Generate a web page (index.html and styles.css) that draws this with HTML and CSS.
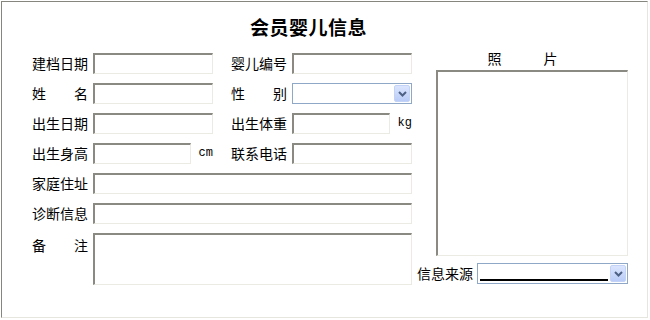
FILE: index.html
```html
<!DOCTYPE html>
<html lang="zh-CN">
<head>
    <meta charset="UTF-8">
    <title>会员婴儿信息</title>
    <link rel="stylesheet" href="styles.css">
</head>
<body>
    <div class="frame">
        <h1 class="title">会员婴儿信息</h1>
        <div class="content">
            <div class="form">
                <div class="row">
                    <div class="field"><span class="lbl">建档日期</span><input class="txt" type="text"></div>
                    <div class="field"><span class="lbl">婴儿编号</span><input class="txt" type="text"></div>
                </div>
                <div class="row">
                    <div class="field"><span class="lbl">姓　　名</span><input class="txt" type="text"></div>
                    <div class="field"><span class="lbl">性　　别</span>
                        <div class="combo">
                            <span class="value"></span>
                            <span class="btn"><svg width="13" height="15" viewBox="0 0 13 15"><polyline points="3,6 6.5,9.5 10,6" fill="none" stroke="#4d6185" stroke-width="2"/></svg></span>
                        </div>
                    </div>
                </div>
                <div class="row">
                    <div class="field"><span class="lbl">出生日期</span><input class="txt" type="text"></div>
                    <div class="field"><span class="lbl">出生体重</span><input class="txt short" type="text"><span class="unit">kg</span></div>
                </div>
                <div class="row">
                    <div class="field"><span class="lbl">出生身高</span><input class="txt short" type="text"><span class="unit">cm</span></div>
                    <div class="field"><span class="lbl">联系电话</span><input class="txt" type="text"></div>
                </div>
                <div class="row">
                    <div class="field wide"><span class="lbl">家庭住址</span><input class="txt" type="text"></div>
                </div>
                <div class="row">
                    <div class="field wide"><span class="lbl">诊断信息</span><input class="txt" type="text"></div>
                </div>
                <div class="row">
                    <div class="field wide top"><span class="lbl">备　　注</span><textarea class="txt memo"></textarea></div>
                </div>
            </div>
            <div class="side">
                <div class="photo-label">照　　　片</div>
                <div class="photo"></div>
                <div class="source">
                    <span class="lbl">信息来源</span>
                    <div class="combo long">
                        <span class="value"><span class="blank"></span></span>
                        <span class="btn"><svg width="13" height="17" viewBox="0 0 13 17"><polyline points="3,7 6.5,10.5 10,7" fill="none" stroke="#4d6185" stroke-width="2"/></svg></span>
                    </div>
                </div>
            </div>
        </div>
    </div>
</body>
</html>
```

FILE: styles.css
```css
body {
    margin: 0;
    background: #fff;
    color: #000;
    font-family: "Noto Sans CJK SC", "Noto Sans", sans-serif;
    font-size: 14px;
    line-height: 17px;
}
.frame {
    box-sizing: border-box;
    width: 647px;
    height: 317px;
    margin: 1px 0 0 1px;
    padding: 12px 0 0 30px;
    border: 1px solid;
    border-color: #86867e #e6e6de #e6e6de #86867e;
}
.title {
    width: 553px;
    margin: 0 0 13px;
    text-align: center;
    font-size: 19px;
    line-height: 26px;
    letter-spacing: 0.5px;
    font-weight: bold;
}
.content {
    display: flex;
    gap: 5px;
    align-items: flex-start;
}
.form {
    width: 380px;
    display: flex;
    flex-direction: column;
    gap: 9px;
}
.row {
    display: flex;
    gap: 18px;
}
.field {
    width: 181px;
    display: flex;
    align-items: center;
    gap: 5px;
}
.field.wide {
    width: 380px;
}
.field.top {
    align-items: flex-start;
}
.field.top .lbl {
    padding-top: 4px;
}
.lbl {
    width: 56px;
    flex: none;
    white-space: nowrap;
}
.txt {
    box-sizing: border-box;
    width: 120px;
    height: 21px;
    margin: 0;
    padding: 0 2px;
    background: #fff;
    border-style: solid;
    border-width: 2px 1px 1px 2px;
    border-color: #8a8a82 #ecebe3 #ecebe3 #8a8a82;
    font: inherit;
    outline: none;
}
.field.wide .txt {
    width: 319px;
}
.txt.short {
    width: 98px;
}
.memo {
    height: 52px;
    resize: none;
}
.unit {
    width: 17px;
    text-align: right;
    font-family: "Liberation Mono", monospace;
    font-size: 12px;
}
.combo {
    box-sizing: border-box;
    width: 120px;
    height: 21px;
    display: flex;
    padding: 1px;
    background: #fff;
    border: 1px solid #8fa8c8;
}
.combo .value {
    flex: 1;
    display: flex;
    align-items: flex-end;
}
.combo .btn {
    box-sizing: border-box;
    width: 16px;
    display: flex;
    align-items: center;
    justify-content: center;
    background: linear-gradient(#dbe5fd, #b9ccf7);
    border: 1px solid #c3d3f8;
    border-radius: 2px;
}
.side {
    width: 211px;
    margin-top: -3px;
}
.photo-label {
    text-align: center;
    margin-bottom: 3px;
}
.photo {
    box-sizing: border-box;
    width: 192px;
    height: 186px;
    margin-left: 19px;
    border-style: solid;
    border-width: 2px 1px 1px 2px;
    border-color: #8a8a82 #ecebe3 #ecebe3 #8a8a82;
}
.source {
    display: flex;
    align-items: center;
    gap: 4px;
    margin-top: 7px;
}
.combo.long {
    width: 151px;
}
.blank {
    width: 128px;
    margin: 0 0 1px 1px;
    border-bottom: 2px solid #000;
}
```
